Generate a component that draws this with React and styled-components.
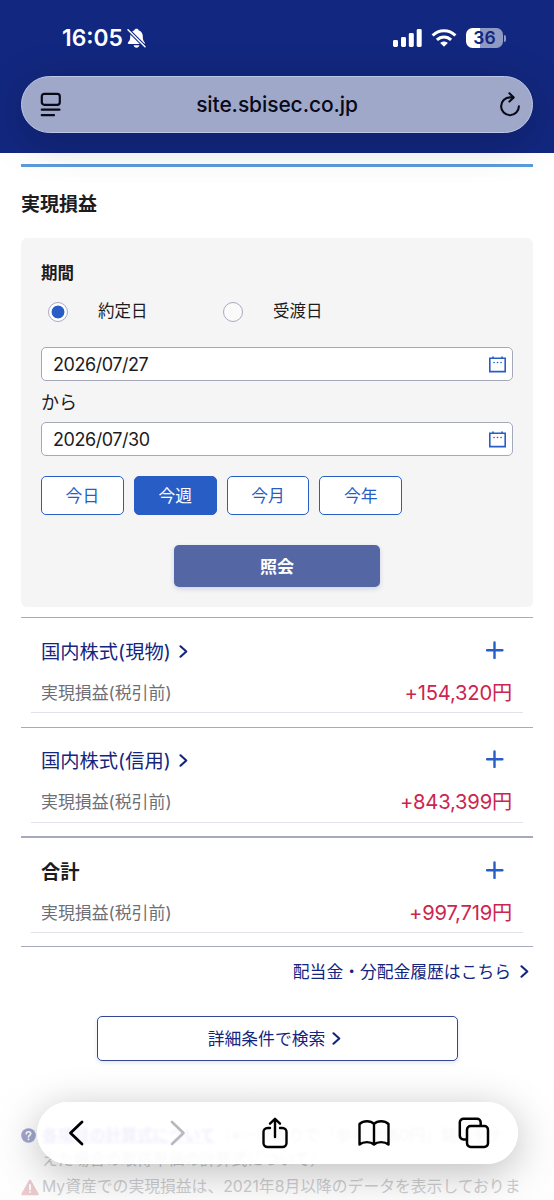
import React, { useState } from 'react';
import styled, { createGlobalStyle } from 'styled-components';

const GlobalStyle = createGlobalStyle`
  * {
    box-sizing: border-box;
  }

  body {
    margin: 0;
    background: #fff;
    color: #1c1c1e;
    font-family: Inter, 'Noto Sans CJK JP', sans-serif;
  }

  button {
    padding: 0;
    font-family: inherit;
  }
`;

const Screen = styled.div`
  position: relative;
  width: 554px;
  height: 1200px;
  overflow: hidden;
`;

const Header = styled.header`
  position: relative;
  height: 153px;
  padding: 0 21px;
  background: #12277f;
`;

const StatusBar = styled.div`
  display: flex;
  align-items: center;
  justify-content: space-between;
  height: 76px;
  padding: 0 27px 0 41px;
  color: #fff;
`;

const StatusGroup = styled.div`
  display: flex;
  align-items: center;
  gap: ${(props) => props.$gap}px;
`;

const Clock = styled.span`
  font-size: 22.8px;
  font-weight: 560;
  line-height: 28px;
`;

const Battery = styled.div`
  display: flex;
  align-items: center;
`;

const BatteryBody = styled.div`
  width: 37px;
  height: 20px;
  border-radius: 6.5px;
  background: linear-gradient(90deg, #fff 37%, #8e99c4 37%);
  color: #12277f;
  font-size: 17.5px;
  font-weight: 600;
  line-height: 20px;
  text-align: center;
`;

const BatteryTip = styled.div`
  width: 2px;
  height: 7px;
  margin-left: 1px;
  border-radius: 0 2px 2px 0;
  background: #8e99c4;
`;

const AddressBar = styled.div`
  display: flex;
  align-items: center;
  justify-content: space-between;
  height: 57px;
  padding: 0 11px 0 18px;
  border: 1px solid #bcc8e8;
  border-radius: 29px;
  background: #9fa8c9;
  box-shadow: 0 8px 44px rgba(0, 0, 0, 0.2);
  color: #080a18;
`;

const Url = styled.span`
  margin-right: 6px;
  font-size: 21px;
  font-weight: 500;
  letter-spacing: -0.1px;
`;

const Content = styled.main`
  padding: 11px 21px 0;
`;

const Title = styled.h1`
  height: 74px;
  margin: 0;
  padding-top: 21px;
  border-top: 3px solid #5b9bdd;
  font-size: 19px;
  font-weight: 600;
  line-height: 33px;
`;

const Panel = styled.section`
  height: 369px;
  padding: 22px 20px 0;
  border-radius: 6px;
  background: #f5f5f6;
`;

const Label = styled.div`
  font-size: 16.5px;
  font-weight: 600;
  line-height: 26px;
`;

const RadioGroup = styled.div`
  display: flex;
  height: 61px;
  padding: 0 7px;
`;

const RadioLabel = styled.label`
  display: flex;
  align-items: center;
  gap: 30px;
  width: 175px;
  height: 51px;
  font-size: 16.5px;
  line-height: 22px;

  span {
    padding-bottom: 1px;
  }
`;

const Radio = styled.input`
  appearance: none;
  width: 20px;
  height: 20px;
  margin: 0;
  border: 1px solid #a9abbf;
  border-radius: 50%;
  background: ${(props) => (props.checked ? 'radial-gradient(circle, #285dc6 6px, #fff 6.8px)' : '#fafafb')};
`;

const DateField = styled.div`
  display: flex;
  align-items: center;
  justify-content: space-between;
  width: 472px;
  height: 34px;
  padding: 0 6px 0 11px;
  border: 1px solid #a5a8b8;
  border-radius: 5px;
  background: #fff;
  font-size: 18px;
  letter-spacing: -0.45px;
`;

const Between = styled.div`
  height: 41px;
  font-size: 18px;
  line-height: 43px;
`;

const PresetList = styled.div`
  display: flex;
  gap: 10px;
  margin-top: 20px;
`;

const PresetButton = styled.button`
  width: 82.8px;
  height: 39px;
  padding-bottom: 2px;
  border: 1px solid #285dc6;
  border-radius: 5px;
  background: ${(props) => (props.$active ? '#285dc6' : '#fff')};
  color: ${(props) => (props.$active ? '#fff' : '#285dc6')};
  font-size: 16.8px;
`;

const SubmitButton = styled.button`
  display: block;
  width: 206px;
  height: 42px;
  margin: 30px auto 0;
  padding-bottom: 2px;
  border: 0;
  border-radius: 5px;
  background: #5566a4;
  box-shadow: 0 2px 5px rgba(60, 80, 150, 0.2);
  color: #fff;
  font-size: 17px;
  font-weight: 600;
`;

const Summary = styled.section`
  margin-top: 10px;
  border-bottom: 1px solid #a6aabb;
`;

const SummaryItem = styled.div`
  height: ${(props) => (props.$total ? 110 : 109.5)}px;
  padding: 16px 10px 0;
  border-top: ${(props) => (props.$total ? '2px' : '1px')} solid #a6aabb;
`;

const SummaryHead = styled.div`
  display: flex;
  align-items: center;
  justify-content: space-between;
  height: 33.4px;
  padding: 0 19px 0 10px;
`;

const SummaryName = styled.span`
  display: flex;
  align-items: center;
  gap: 8px;
  color: ${(props) => (props.$total ? '#1c1c1e' : '#13257f')};
  font-size: 19.3px;
  font-weight: ${(props) => (props.$total ? 600 : 400)};
`;

const SummaryBody = styled.div`
  display: flex;
  align-items: center;
  justify-content: space-between;
  height: 46px;
  padding: 3px 11px 0 10px;
  border-bottom: 1px solid #e2e3ea;
  color: #6d6e76;
  font-size: 16.9px;
`;

const Amount = styled.span`
  color: #cb2550;
  font-size: 20.2px;
  letter-spacing: -0.2px;
`;

const HistoryLink = styled.a`
  display: flex;
  align-items: center;
  justify-content: flex-end;
  gap: 9px;
  height: 47px;
  padding-right: 4px;
  color: #13257f;
  font-size: 16.8px;
`;

const DetailButton = styled.button`
  display: flex;
  align-items: center;
  justify-content: center;
  gap: 7px;
  width: 361px;
  height: 45px;
  margin: 22px auto 0;
  padding: 0 5px 2px 0;
  border: 1px solid #34468f;
  border-radius: 5px;
  background: #fff;
  box-shadow: 0 2px 4px rgba(40, 60, 130, 0.12);
  color: #13257f;
  font-size: 16.8px;
`;

const Notes = styled.div`
  margin-top: 63px;
  font-size: 16.8px;
  line-height: 24px;
  white-space: nowrap;
`;

const Note = styled.div`
  display: grid;
  grid-template-columns: 21px 1fr;
  height: ${(props) => props.$height}px;
  color: #b9b9bc;
  font-size: 15.8px;

  svg {
    margin-top: 4px;
  }

  a {
    color: #7a78ea;
    font-weight: 700;
    text-decoration: underline;
  }
`;

const BottomFade = styled.div`
  position: absolute;
  right: 0;
  bottom: 0;
  left: 0;
  height: 130px;
  background: linear-gradient(rgba(255, 255, 255, 0), rgba(250, 250, 250, 0.35));
`;

const Toolbar = styled.nav`
  position: absolute;
  top: 1102px;
  left: 37px;
  display: grid;
  grid-template-columns: repeat(5, 99.5px);
  place-content: center;
  place-items: center;
  width: 481px;
  height: 62px;
  padding-right: 6px;
  border: 1px solid #fff;
  border-radius: 31px;
  background: rgba(255, 255, 255, 0.87);
  backdrop-filter: blur(1.5px);
  box-shadow: 0 8px 40px rgba(0, 0, 0, 0.26);

  svg:nth-child(2) {
    margin-left: 5px;
  }
`;

const Icon = ({ width, height, children, strokeWidth = 2.4, color = 'currentColor' }) => (
  <svg
    width={width}
    height={height}
    viewBox={`0 0 ${width} ${height}`}
    fill="none"
    stroke={color}
    strokeWidth={strokeWidth}
    strokeLinecap="round"
    strokeLinejoin="round"
  >
    {children}
  </svg>
);

const BellOffIcon = () => (
  <svg width="19" height="21" viewBox="0 0 19 21">
    <path d="M9.5 .8C10.6 .8 11.4 1.4 11.6 2.2C14.6 3.2 15.8 5.6 15.8 8.5C15.8 12.2 16.6 13.2 17.6 14.3C18.3 15.2 17.9 16 16.9 16H1.9C.8 16 .4 15.2 1.1 14.3C2.4 13 3.2 12.2 3.2 8.5C3.2 5.6 4.5 3.2 7.4 2.2C7.6 1.4 8.4 .8 9.5 .8Z" fill="#fff" />
    <path d="M6.6 17.3H12.4C12.1 18.9 11 19.8 9.5 19.8S6.9 18.9 6.6 17.3Z" fill="#fff" />
    <path d="M.5 1.3L18.5 19.3" stroke="#12277f" strokeWidth="3.6" />
    <path d="M1 1.8L18 18.8" stroke="#fff" strokeWidth="1.5" strokeLinecap="round" />
  </svg>
);

const SignalIcon = () => (
  <svg width="29" height="18" viewBox="0 0 29 18" fill="#fff">
    <rect x="0" y="11" width="5" height="7" rx="1.4" />
    <rect x="8" y="8" width="5" height="10" rx="1.4" />
    <rect x="15.8" y="4" width="5" height="14" rx="1.4" />
    <rect x="23.7" y="0" width="5" height="18" rx="1.4" />
  </svg>
);

const WifiIcon = () => (
  <svg width="26" height="18" viewBox="0 0 26 18" fill="none" stroke="#fff" strokeWidth="3">
    <path d="M1.6 6.5C8 .1 18 .1 24.4 6.5" />
    <path d="M5.9 10.9C10 7 16 7 20.1 10.9" />
    <path d="M9.2 14.1C11.4 12.1 14.6 12.1 16.8 14.1L13 17.8Z" fill="#fff" stroke="none" />
  </svg>
);

const CalendarIcon = () => (
  <Icon width={17} height={17} strokeWidth={1.6} color="#285dc6">
    <path d="M.8 2.3H16.2V15.6H.8ZM4 1V2.3M13 1V2.3" strokeLinejoin="miter" />
    <path d="M5 6.5H5.1M8.5 6.5H8.6M12 6.5H12.1" />
  </Icon>
);

const ChevronIcon = () => (
  <Icon width={9} height={14} strokeWidth={2.1}>
    <path d="M1.5 2.3L7.3 7.5L1.5 12.7" />
  </Icon>
);

const PlusIcon = () => (
  <Icon width={18} height={20} strokeWidth={2.4} color="#285dc6">
    <path d="M8.5 1.5V16.9M1 9.2H16.4" />
  </Icon>
);

const PRESETS = ['今日', '今週', '今月', '今年'];

const SUMMARY = [
  { name: '国内株式(現物)', amount: '+154,320円' },
  { name: '国内株式(信用)', amount: '+843,399円' },
  { name: '合計', amount: '+997,719円', total: true },
];

const App = () => {
  const [dateType, setDateType] = useState('trade');
  const [preset, setPreset] = useState('今週');

  return (
    <Screen>
      <GlobalStyle />
      <Header>
        <StatusBar>
          <StatusGroup $gap={4}>
            <Clock>16:05</Clock>
            <BellOffIcon />
          </StatusGroup>
          <StatusGroup $gap={9}>
            <SignalIcon />
            <WifiIcon />
            <Battery>
              <BatteryBody>36</BatteryBody>
              <BatteryTip />
            </Battery>
          </StatusGroup>
        </StatusBar>
        <AddressBar>
          <Icon width={21} height={25} strokeWidth={2.2}>
            <rect x="1.8" y="1.8" width="18" height="11" rx="2.5" />
            <path d="M1.8 17.7H19.5M1.8 23.2H14" />
          </Icon>
          <Url>site.sbisec.co.jp</Url>
          <Icon width={22} height={26} strokeWidth={2.1}>
            <path d="M14 5.4H11A8.9 8.9 0 1 0 19.9 14.3" />
            <path d="M10.4 1.3L14.7 5.4L10.4 9.6" />
          </Icon>
        </AddressBar>
      </Header>
      <Content>
        <Title>実現損益</Title>
        <Panel>
          <Label>期間</Label>
          <RadioGroup>
            <RadioLabel>
              <Radio type="radio" name="dateType" checked={dateType === 'trade'} onChange={() => setDateType('trade')} />
              <span>約定日</span>
            </RadioLabel>
            <RadioLabel>
              <Radio type="radio" name="dateType" checked={dateType === 'delivery'} onChange={() => setDateType('delivery')} />
              <span>受渡日</span>
            </RadioLabel>
          </RadioGroup>
          <DateField>
            <span>2026/07/27</span>
            <CalendarIcon />
          </DateField>
          <Between>から</Between>
          <DateField>
            <span>2026/07/30</span>
            <CalendarIcon />
          </DateField>
          <PresetList>
            {PRESETS.map((name) => (
              <PresetButton key={name} type="button" $active={preset === name} onClick={() => setPreset(name)}>
                {name}
              </PresetButton>
            ))}
          </PresetList>
          <SubmitButton type="button">照会</SubmitButton>
        </Panel>
        <Summary>
          {SUMMARY.map(({ name, amount, total }) => (
            <SummaryItem key={name} $total={total}>
              <SummaryHead>
                <SummaryName $total={total}>
                  {name}
                  {!total && <ChevronIcon />}
                </SummaryName>
                <PlusIcon />
              </SummaryHead>
              <SummaryBody>
                <span>実現損益(税引前)</span>
                <Amount>{amount}</Amount>
              </SummaryBody>
            </SummaryItem>
          ))}
        </Summary>
        <HistoryLink>
          配当金・分配金履歴はこちら
          <ChevronIcon />
        </HistoryLink>
        <DetailButton type="button">
          詳細条件で検索
          <ChevronIcon />
        </DetailButton>
        <Notes>
          <Note $height={51}>
            <svg width="15" height="15" viewBox="0 0 15 15">
              <circle cx="7.5" cy="7.5" r="7.3" fill="#8f94c4" />
              <path d="M5.3 5.8C5.4 3 9.8 3.1 9.7 5.8C9.6 7.3 7.6 7.2 7.5 9M7.5 11.2V11.4" fill="none" stroke="#fff" strokeWidth="1.7" strokeLinecap="round" />
            </svg>
            <div>
              <a>各項目の計算式について</a>（※一部取りで「参考単価0円」銘柄をナ
              <br />
              えた場合の取得単価の計算式について）
            </div>
          </Note>
          <Note $height={26}>
            <svg width="18" height="17" viewBox="0 0 18 17">
              <path d="M9 1.5L16.7 15.3H1.3Z" fill="#e2b3b6" stroke="#e2b3b6" strokeWidth="2" strokeLinejoin="round" />
              <path d="M9 6V10.3M9 13V13.1" stroke="#fff" strokeWidth="1.8" strokeLinecap="round" />
            </svg>
            <span>My資産での実現損益は、2021年8月以降のデータを表示しておりま</span>
          </Note>
        </Notes>
      </Content>
      <BottomFade />
      <Toolbar>
        <Icon width={16} height={26} strokeWidth={2.8} color="#000">
          <path d="M14 2L2.5 13L14 24" />
        </Icon>
        <Icon width={16} height={26} strokeWidth={2.6} color="#b9b9bd">
          <path d="M2 2L13.5 13L2 24" />
        </Icon>
        <Icon width={28} height={32} strokeWidth={2.4} color="#000">
          <path d="M9 11H6.5A4 4 0 0 0 2.5 15V26A4 4 0 0 0 6.5 30H21.5A4 4 0 0 0 25.5 26V15A4 4 0 0 0 21.5 11H19" />
          <path d="M14 20V2M9 6.7L14 1.8L19 6.7" />
        </Icon>
        <Icon width={32} height={28} strokeWidth={2.4} color="#000">
          <path d="M16 5C12.5 1.3 5.5 1.3 1.5 5V25.5C5.5 22.3 12.5 22.3 16 25.5C19.5 22.3 26.5 22.3 30.5 25.5V5C26.5 1.3 19.5 1.3 16 5ZM16 5V25" />
        </Icon>
        <Icon width={32} height={32} strokeWidth={2.5} color="#000">
          <path d="M8.5 22.5H5.5A3.7 3.7 0 0 1 1.8 18.8V5.5A3.7 3.7 0 0 1 5.5 1.8H19A3.7 3.7 0 0 1 22.7 5.5V8.5" />
          <rect x="9" y="9" width="21" height="21" rx="3.7" />
        </Icon>
      </Toolbar>
    </Screen>
  );
};

export default App;
